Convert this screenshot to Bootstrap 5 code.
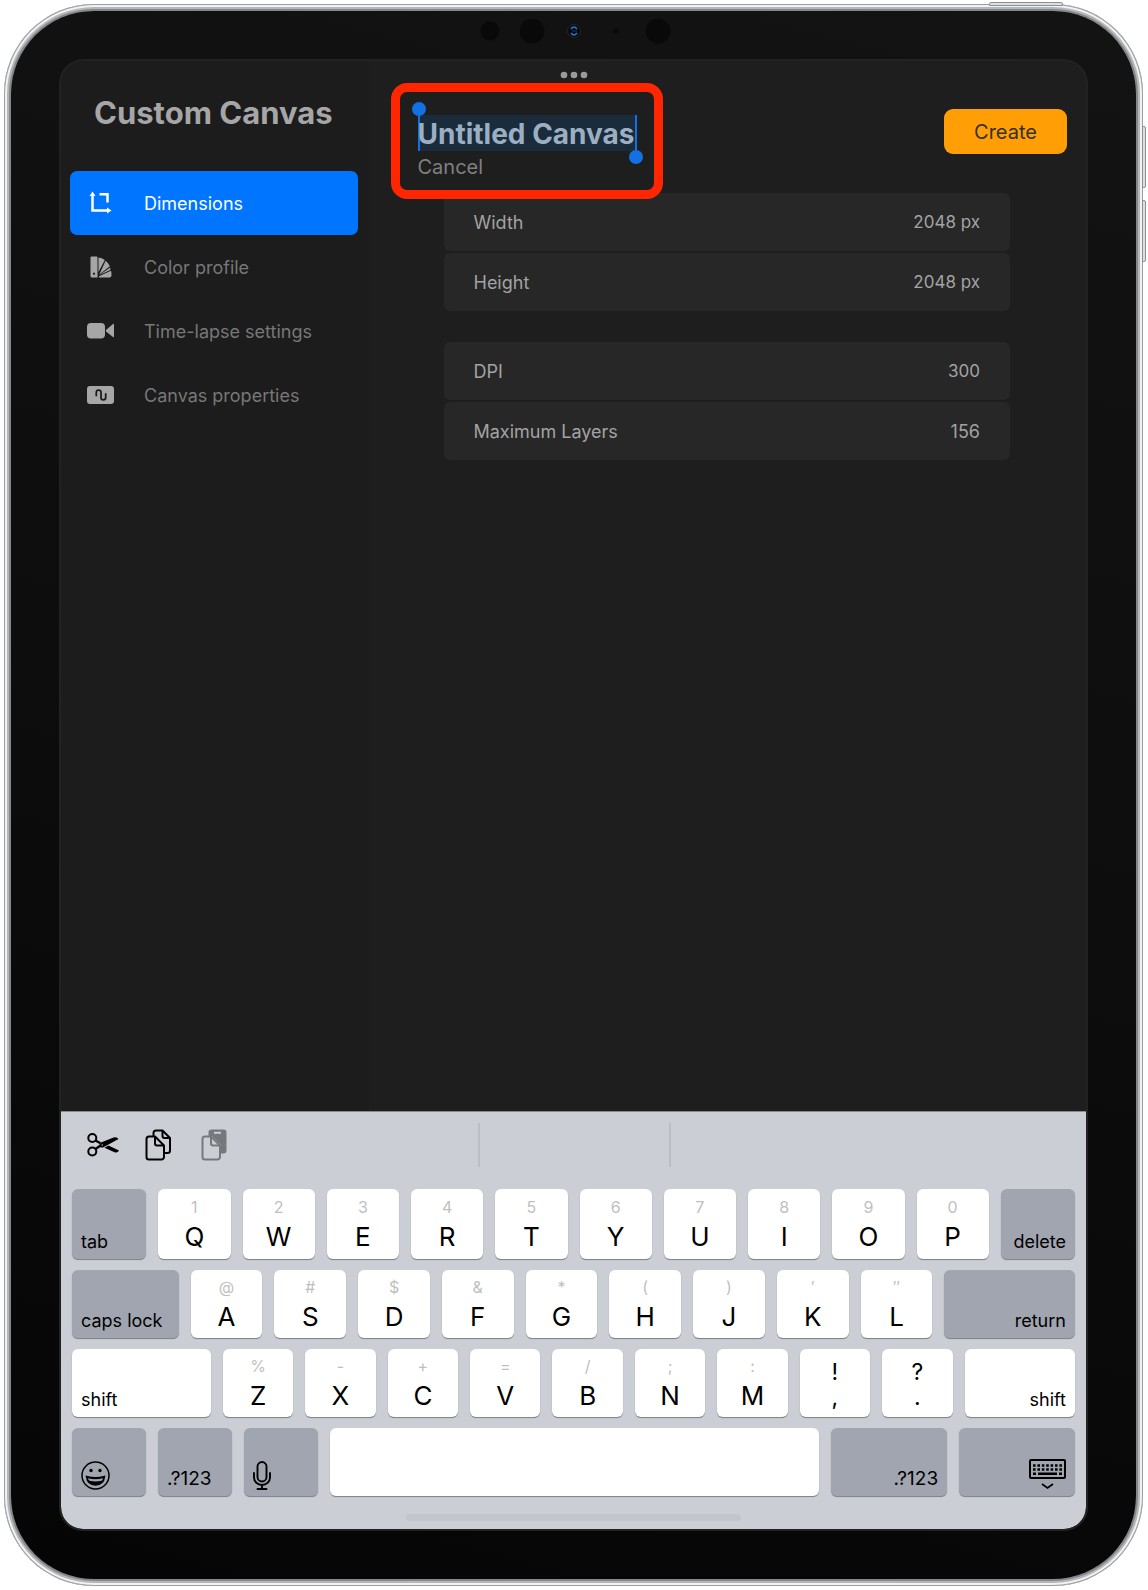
<!DOCTYPE html>
<html lang="en">
<head>
<meta charset="utf-8">
<meta name="viewport" content="width=device-width, initial-scale=1">
<title>Custom Canvas</title>
<link href="https://cdn.jsdelivr.net/npm/bootstrap@5.3.0/dist/css/bootstrap.min.css" rel="stylesheet">
<script src="https://cdn.jsdelivr.net/npm/bootstrap@5.3.0/dist/js/bootstrap.bundle.min.js"></script>
<style>
  body { font-family: Inter, "Liberation Sans", sans-serif; background: #fff; padding: 4px 5px 4px 4px; }
  .tablet { min-height: calc(100vh - 8px); padding: 7px; border-radius: 90px; background: #bbb;
    box-shadow: inset 0 0 0 1px #9b9d9f, inset 0 0 0 3px #f1f2f3, inset 0 0 0 5px #b4b6b8, inset 0 0 0 7px #85878a; }
  .bezel { border-radius: 83px; padding: 0 48px 48px; background: linear-gradient(15deg, #050505, #0d0d0d 50%, #131313); }
  .sensor-bar { height: 48px; padding-bottom: 8px; }
  .hw { background: #dcdedf; border: 1px solid #8d8f91; }
  .hw-top { top: -2px; right: 80px; width: 74px; height: 4px; border-radius: 2px 2px 0 0; }
  .hw-side { right: -3px; width: 4px; height: 62px; border-radius: 0 2px 2px 0; }
  .hw-up { top: 122px; }
  .hw-down { top: 196px; }
  .screen { border: 2px solid #222; border-radius: 25px 25px 24px 24px; background: #1e1e1e; }
  .multitask { top: 10px; }
  .side-panel { width: 30%; background: #1c1c1c; padding: 32px 11px 0 9px; }
  .side-title { font-size: 31px; line-height: 40px; font-weight: 700; color: #a6a6a6; padding-left: 24px; margin-bottom: 38px; white-space: nowrap; }
  .side-panel .nav-link { height: 64px; padding: 0 16px; border-radius: 7px; font-size: 18px; color: #777; }
  .side-panel .nav-link.active { background: #0075ff; color: #fff; }
  .side-panel svg { width: 30px; height: 30px; margin-right: 28px; color: #a6a6a6; }
  .side-panel .active svg { color: #fff; }
  .main-panel { padding: 48px 19px 0 49px; }
  .name-block { padding-top: 6px; width: 219px; height: 84px; }
  .name-input { width: 219px; height: 36px; font-size: 28px; font-weight: 700; color: #9cafc2; background: #1a2b3b; border: 0; box-shadow: inset 2px 0 #1471e3, inset -2px 0 #1471e3; padding: 2px 0 0; border-radius: 0; outline: 0; }
  .cancel-btn { font-size: 20px; line-height: 28px; color: #808080; padding: 2px 0 0; border: 0; }
  .grab { width: 14px; height: 14px; border-radius: 50%; background: #1471e3; }
  .grab-start { left: -6px; top: -7px; }
  .grab-end { right: -6px; top: 41px; }
  .callout-box { inset: -26px -26px -6px -27px; border: 9px solid #ff2600; border-radius: 16px; pointer-events: none; }
  .create-btn, .create-btn:hover { width: 123px; height: 45px; border: 0; border-radius: 9px; background: #ff9f05; color: #33302b; font-size: 20px; line-height: 28px; }
  .settings { padding: 0 57px 0 26px; }
  .set-row { height: 58px; padding: 0 30px; border-radius: 6px; background: #272727; color: #a3a3a3; font-size: 18px; }
  .set-row input { width: 120px; padding: 2px 0 0; border: 0; background: none; color: inherit; font-size: 17px; text-align: right; outline: 0; }
  .set-group { gap: 2px; margin-bottom: 31px; }
  .keyboard { background: #cbced5; padding: 0 11px 8px; border-radius: 0 0 22px 22px; border-top: 1px solid #88898c; }
  .suggest { height: 77px; padding-bottom: 11px; }
  .suggest .divide { width: 193px; height: 44px; border: solid #bbbec3; border-width: 0 2px; }
  .suggest button { width: 32px; height: 32px; padding: 0; border: 0; background: none; }
  .tool-btns { gap: 24px; padding-left: 15px; }
  .suggest .btn:disabled { opacity: 1; color: #77787b; }
  .key-row { gap: 12px; margin-bottom: 11px; }
  .keycap { flex: 72 1 0; min-width: 0; height: 68px; border: 0; border-radius: 6px; background: #fff; color: #000; padding: 0 0 1px; box-shadow: 0 2px 0 -1px #85878b, 0 1px 1px #85878b; font-size: 26px; line-height: 32px; text-align: center; }
  .key-row-top .keycap { height: 70px; }
  .keycap small { display: block; font-size: 16px; line-height: 24px; margin-bottom: 2px; color: #bfbfbf; }
  .keycap .pair { display: block; font-size: 23px; line-height: 25px; }
  .keycap .pair:first-child { padding-top: 5px; }
  .fn { font-size: 18px; line-height: 24px; padding: 0 0 5px; display: flex; align-items: flex-end; white-space: nowrap; }
  .fn::before, .fn::after { content: ""; flex: 0 0 9px; }
  .fn-num { font-size: 19px; }
  .fn-icon { padding-bottom: 6px; }
  .fn-dark { background: #a1a5b0; }
  .fn-end { justify-content: flex-end; }
  .g74 { flex-grow: 74; } .g107 { flex-grow: 107; } .g113 { flex-grow: 113; } .g116 { flex-grow: 116; }
  .g131 { flex-grow: 131; } .g142 { flex-grow: 142; } .g490 { flex-grow: 490; }
  .home-bar { width: 335px; height: 7px; border-radius: 4px; background: #c2c5ca; margin: 18px auto 0; }
</style>
</head>
<body>
<div class="tablet position-relative d-flex">
  <span class="hw hw-top position-absolute"></span>
  <span class="hw hw-side hw-up position-absolute"></span>
  <span class="hw hw-side hw-down position-absolute"></span>
  <div class="bezel flex-grow-1 d-flex flex-column">
    <div class="sensor-bar d-flex justify-content-center align-items-center">
      <svg width="194" height="28" viewBox="0 0 194 28" aria-hidden="true">
        <g fill="#090909"><circle cx="13" cy="14" r="9.5"/><circle cx="55" cy="14" r="12.3"/><circle cx="181" cy="14" r="12.5"/><circle cx="139" cy="14" r="2.5"/></g>
        <circle cx="97" cy="14" r="6.5" fill="#0a0a0c" stroke="#252525"/>
        <path d="M94 12q3-4 6 0M94 16q3 4 6 0" fill="none" stroke="#2877d4" stroke-width="1.6"/><path d="M95 14h5" stroke="#153b70"/>
      </svg>
    </div>
    <div class="screen position-relative flex-grow-1 d-flex flex-column overflow-hidden">
      <svg class="multitask position-absolute start-50 translate-middle-x" width="28" height="8" viewBox="0 0 28 8" fill="#9b9b9b" aria-hidden="true"><circle cx="4" cy="4" r="3.3"/><circle cx="14" cy="4" r="3.3"/><circle cx="24" cy="4" r="3.3"/></svg>
      <div class="d-flex flex-grow-1">
        <aside class="side-panel flex-shrink-0">
          <h1 class="side-title">Custom Canvas</h1>
          <nav class="nav nav-pills flex-column">
            <a class="nav-link active d-flex align-items-center" href="#" aria-current="page">
              <svg viewBox="0 0 30 30" fill="none" stroke="currentColor" stroke-width="2.5"><path d="M6.500 7V22.500H22M13.500 6.300H21.500V14.500"/><path d="M3.500 8 6.500 3.500l3 4.500zM21 19.500 25.500 22.500 21 25.500z" fill="currentColor" stroke="none"/></svg>Dimensions</a>
            <a class="nav-link d-flex align-items-center" href="#">
              <svg viewBox="0 0 30 30" fill="currentColor"><path fill-rule="evenodd" d="M5.500 4.500H10.500a1 1 0 0 1 1 1V25.500H6A1.500 1.500 0 0 1 4.500 24V5.500A1 1 0 0 1 5.500 4.500zM8 20.500a1.100 1.100 0 1 0 .01 0z"/><path d="M12.500 5.500q3.500 .2 6.300 2.500L12.500 20zM19.600 8.800q3.200 2.500 4.300 5.500L13.300 22.500zM24.300 15.500V18L13.500 23zM25 18.800q.6 2 .5 4.700-.2 2-2 2H13v-1.200z"/></svg>Color profile</a>
            <a class="nav-link d-flex align-items-center" href="#">
              <svg viewBox="0 0 30 30" fill="currentColor"><rect x="1" y="7" width="18" height="15.500" rx="4"/><path d="M20 14 27 8q1-.5 1 .7V20.500q0 1.200-1 .6L20 15.500z"/></svg>Time-lapse settings</a>
            <a class="nav-link d-flex align-items-center" href="#">
              <svg viewBox="0 0 30 30"><rect x="1" y="6" width="27" height="18" rx="3" fill="currentColor"/><path d="M10.300 15.500V12.500a2.300 2.300 0 0 1 4.700 0V17.500a2.300 2.300 0 0 0 4.700 0V14" fill="none" stroke="#1c1c1c" stroke-width="1.800" stroke-linecap="round"/></svg>Canvas properties</a>
          </nav>
        </aside>
        <main class="main-panel flex-grow-1">
          <div class="d-flex justify-content-between align-items-start">
            <div class="name-block position-relative">
              <input class="name-input d-block" type="text" value="Untitled Canvas" aria-label="Canvas name">
              <button class="cancel-btn btn d-block" type="button">Cancel</button>
              <span class="grab grab-start position-absolute"></span>
              <span class="grab grab-end position-absolute"></span>
              <span class="callout-box position-absolute"></span>
            </div>
            <button class="create-btn btn p-0" type="button">Create</button>
          </div>
          <form class="settings">
            <div class="set-group d-flex flex-column">
              <div class="set-row d-flex align-items-center justify-content-between"><label for="w">Width</label><input id="w" type="text" value="2048 px"></div>
              <div class="set-row d-flex align-items-center justify-content-between"><label for="h">Height</label><input id="h" type="text" value="2048 px"></div>
            </div>
            <div class="set-group d-flex flex-column">
              <div class="set-row d-flex align-items-center justify-content-between"><label for="dpi">DPI</label><input id="dpi" type="text" value="300"></div>
              <div class="set-row d-flex align-items-center justify-content-between"><label for="layers">Maximum Layers</label><output id="layers">156</output></div>
            </div>
          </form>
        </main>
      </div>
      <section class="keyboard" aria-label="Keyboard">
        <div class="suggest d-flex align-items-center">
          <div class="tool-btns d-flex flex-fill w-50">
            <button class="btn" type="button" aria-label="Cut"><svg class="d-block" width="32" height="32" viewBox="0 0 32 32" fill="none" stroke="#000" stroke-width="2"><circle cx="5.300" cy="9" r="4"/><circle cx="5.300" cy="22.500" r="4"/><path d="M8.500 11.500 13.500 14.200M8.500 20 15 15.500" stroke-width="2.400"/><path d="M12.500 16 14 13.500 26.500 8.500q3.500-1 5 1.500L16 18.500q-3.500 .5-3.500-2.500zM17.500 18.700l4-2.200 10.500 5q-1.500 3-4.500 1.700z" fill="#000" stroke="none"/><circle cx="15.200" cy="16" r=".7" fill="#cbced5" stroke="none"/></svg></button>
            <button class="btn" type="button" aria-label="Copy"><svg class="d-block" width="32" height="32" viewBox="0 0 32 32" fill="none" stroke="#000" stroke-width="2" stroke-linejoin="round"><path d="M10.500 7V4a2.500 2.500 0 0 1 2.500-2.500h6.500L27 9v12.500a2.500 2.500 0 0 1-2.500 2.500H22M19.500 2v5a2 2 0 0 0 2 2H27"/><path d="M6.500 7.500H12L21 16.500v11.500a2.500 2.500 0 0 1-2.500 2.500H6A2.500 2.500 0 0 1 3.500 28V10A2.500 2.500 0 0 1 6 7.500zM12 8v6.500a2 2 0 0 0 2 2h7"/></svg></button>
            <button class="btn" type="button" aria-label="Paste" disabled><svg class="d-block" width="32" height="32" viewBox="0 0 32 32" fill="none" stroke="currentColor" stroke-width="2" stroke-linejoin="round"><path d="M9.500 7V3.500A3 3 0 0 1 12.500.500h12a3 3 0 0 1 3 3v18a3 3 0 0 1-3 3H22V16L13 7z" fill="currentColor" stroke="none"/><path d="M15 3.800h7" stroke="#cbced5"/><path d="M6.500 7.500H12L21 16.500v11.500a2.500 2.500 0 0 1-2.500 2.500H6A2.500 2.500 0 0 1 3.500 28V10A2.500 2.500 0 0 1 6 7.500z" fill="#cbced5"/><path d="M12 8v6.500a2 2 0 0 0 2 2h7"/></svg></button>
          </div>
          <div class="divide flex-shrink-0"></div>
          <div class="flex-fill w-50"></div>
        </div>
        <div class="key-row key-row-top d-flex">
          <button class="keycap fn fn-dark g74" type="button">tab</button>
          <button class="keycap" type="button"><small>1</small>Q</button>
          <button class="keycap" type="button"><small>2</small>W</button>
          <button class="keycap" type="button"><small>3</small>E</button>
          <button class="keycap" type="button"><small>4</small>R</button>
          <button class="keycap" type="button"><small>5</small>T</button>
          <button class="keycap" type="button"><small>6</small>Y</button>
          <button class="keycap" type="button"><small>7</small>U</button>
          <button class="keycap" type="button"><small>8</small>I</button>
          <button class="keycap" type="button"><small>9</small>O</button>
          <button class="keycap" type="button"><small>0</small>P</button>
          <button class="keycap fn fn-dark fn-end g74" type="button">delete</button>
        </div>
        <div class="key-row d-flex">
          <button class="keycap fn fn-dark g107" type="button">caps lock</button>
          <button class="keycap" type="button"><small>@</small>A</button>
          <button class="keycap" type="button"><small>#</small>S</button>
          <button class="keycap" type="button"><small>$</small>D</button>
          <button class="keycap" type="button"><small>&amp;</small>F</button>
          <button class="keycap" type="button"><small>*</small>G</button>
          <button class="keycap" type="button"><small>(</small>H</button>
          <button class="keycap" type="button"><small>)</small>J</button>
          <button class="keycap" type="button"><small>′</small>K</button>
          <button class="keycap" type="button"><small>″</small>L</button>
          <button class="keycap fn fn-dark fn-end g131" type="button">return</button>
        </div>
        <div class="key-row d-flex">
          <button class="keycap fn g142" type="button">shift</button>
          <button class="keycap" type="button"><small>%</small>Z</button>
          <button class="keycap" type="button"><small>-</small>X</button>
          <button class="keycap" type="button"><small>+</small>C</button>
          <button class="keycap" type="button"><small>=</small>V</button>
          <button class="keycap" type="button"><small>/</small>B</button>
          <button class="keycap" type="button"><small>;</small>N</button>
          <button class="keycap" type="button"><small>:</small>M</button>
          <button class="keycap" type="button"><span class="pair">!</span><span class="pair">,</span></button>
          <button class="keycap" type="button"><span class="pair">?</span><span class="pair">.</span></button>
          <button class="keycap fn fn-end g113" type="button">shift</button>
        </div>
        <div class="key-row d-flex mb-0">
          <button class="keycap fn fn-icon fn-dark g74" type="button" aria-label="Emoji"><svg width="29" height="29" viewBox="0 0 29 29" fill="none" stroke="#000" stroke-width="1.500"><circle cx="14.500" cy="14.500" r="13.500"/><circle cx="10" cy="9.500" r="1.700" fill="#000" stroke="none"/><circle cx="19" cy="9.500" r="1.700" fill="#000" stroke="none"/><path d="M5.500 15.500q9 2.500 18 0Q22.500 24 14.500 24T5.500 15.500z" fill="#000"/><path d="M7 17.300q7.500 2 15 0-.3 2-1.500 2.500-6 1.200-12 0-1.200-.7-1.500-2.500z" fill="#a1a5b0" stroke="none"/></svg></button>
          <button class="keycap fn fn-num fn-dark g74" type="button">.?123</button>
          <button class="keycap fn fn-icon fn-dark g74" type="button" aria-label="Dictate"><svg width="18" height="29" viewBox="0 0 18 29" fill="none" stroke="#000" stroke-width="1.900" stroke-linecap="round"><rect x="4.500" y="1" width="9" height="19.500" rx="4.500"/><path d="M1 12v4.500a8 7.500 0 0 0 16 0V12M9 24v4M4.500 28h9"/></svg></button>
          <button class="keycap g490" type="button" aria-label="Space"></button>
          <button class="keycap fn fn-num fn-dark fn-end g116" type="button">.?123</button>
          <button class="keycap fn fn-icon fn-dark fn-end g116" type="button" aria-label="Hide keyboard"><svg width="37" height="31" viewBox="0 0 37 31" fill="none" stroke="#000" stroke-width="2"><rect x="1" y="1" width="35" height="18" rx="1"/><path d="M4 6.500h29M4 10.500h29" stroke-width="2.600" stroke-dasharray="2.600 1.800"/><path d="M4 14.800h3M9 14.800h19M30 14.800h3" stroke-width="2.600"/><path d="M13 25l5.500 4 5.500-4" stroke-width="1.800"/></svg></button>
        </div>
        <div class="home-bar"></div>
      </section>
    </div>
  </div>
</div>
</body>
</html>
